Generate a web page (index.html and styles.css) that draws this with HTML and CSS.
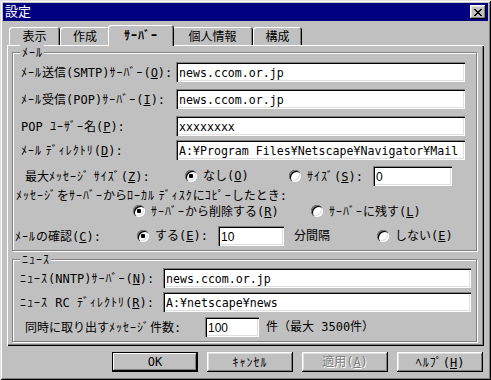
FILE: index.html
```html
<!DOCTYPE HTML>
<html lang="ja">
<head>
    <title>設定</title>
    <meta charset="UTF-8">
    <link rel="stylesheet" href="styles.css">
</head>
<body>
<div class="window">
    <div class="title-bar">
        <span class="title-text">設定</span>
        <div class="close-btn">
            <svg width="8" height="7" viewBox="0 0 8 7">
                <path d="M0 0h2v1H0zM6 0h2v1H6zM1 1h2v1H1zM5 1h2v1H5zM2 2h4v1H2zM3 3h2v1H3zM2 4h4v1H2zM1 5h2v1H1zM5 5h2v1H5zM0 6h2v1H0zM6 6h2v1H6z" fill="#000"/>
            </svg>
        </div>
    </div>

    <div class="tabs">
        <div class="tab tab-1">表示</div>
        <div class="tab tab-2">作成</div>
        <div class="tab tab-active"><span class="hw">ｻｰﾊﾞｰ</span></div>
        <div class="tab tab-4">個人情報</div>
        <div class="tab tab-5">構成</div>
    </div>

    <div class="panel">
        <div class="group group-mail">
            <span class="group-label"><span class="hw">ﾒｰﾙ</span></span>

            <div class="row r1">
                <span class="lbl lbl-mail"><span class="hw">ﾒｰﾙ</span>送信(SMTP)<span class="hw">ｻｰﾊﾞｰ</span>(<u>O</u>):</span>
                <span class="field field-mail">news.ccom.or.jp</span>
            </div>
            <div class="row r2">
                <span class="lbl lbl-mail"><span class="hw">ﾒｰﾙ</span>受信(POP)<span class="hw">ｻｰﾊﾞｰ</span>(<u>I</u>):</span>
                <span class="field field-mail">news.ccom.or.jp</span>
            </div>
            <div class="row r3">
                <span class="lbl lbl-mail">POP <span class="hw">ﾕｰｻﾞｰ</span>名(<u>P</u>):</span>
                <span class="field field-mail">xxxxxxxx</span>
            </div>
            <div class="row r4">
                <span class="lbl lbl-mail"><span class="hw">ﾒｰﾙ ﾃﾞｨﾚｸﾄﾘ</span>(<u>D</u>):</span>
                <span class="field field-mail">A:¥Program Files¥Netscape¥Navigator¥Mail</span>
            </div>

            <div class="row r5">
                <span class="lbl lbl-size">最大<span class="hw">ﾒｯｾｰｼﾞ ｻｲｽﾞ</span>(<u>Z</u>):</span>
                <span class="opt opt-none"><i class="radio checked"></i><span>なし(<u>O</u>)</span></span>
                <span class="opt opt-size"><i class="radio"></i><span><span class="hw">ｻｲｽﾞ</span>(<u>S</u>):</span></span>
                <span class="field field-num field-size">0</span>
            </div>
            <div class="row-text r6">
                <span><span class="hw">ﾒｯｾｰｼﾞ</span>を<span class="hw">ｻｰﾊﾞｰ</span>から<span class="hw">ﾛｰｶﾙ ﾃﾞｨｽｸ</span>に<span class="hw">ｺﾋﾟｰ</span>したとき:</span>
            </div>
            <div class="row-text r7">
                <span class="opt opt-delete"><i class="radio checked"></i><span><span class="hw">ｻｰﾊﾞｰ</span>から削除する(<u>R</u>)</span></span>
                <span class="opt"><i class="radio"></i><span><span class="hw">ｻｰﾊﾞｰ</span>に残す(<u>L</u>)</span></span>
            </div>
            <div class="row r8">
                <span class="lbl lbl-check"><span class="hw">ﾒｰﾙ</span>の確認(<u>C</u>):</span>
                <span class="opt opt-check"><i class="radio checked"></i><span>する(<u>E</u>):</span></span>
                <span class="field field-num field-minutes">10</span>
                <span class="unit">分間隔</span>
                <span class="opt"><i class="radio"></i><span>しない(<u>E</u>)</span></span>
            </div>
        </div>

        <div class="group group-news">
            <span class="group-label"><span class="hw">ﾆｭｰｽ</span></span>

            <div class="row n1">
                <span class="lbl lbl-news"><span class="hw">ﾆｭｰｽ</span>(NNTP)<span class="hw">ｻｰﾊﾞｰ</span>(<u>N</u>):</span>
                <span class="field field-news">news.ccom.or.jp</span>
            </div>
            <div class="row n2">
                <span class="lbl lbl-news"><span class="hw">ﾆｭｰｽ</span> RC <span class="hw">ﾃﾞｨﾚｸﾄﾘ</span>(<u>R</u>):</span>
                <span class="field field-news">A:¥netscape¥news</span>
            </div>
            <div class="row n3">
                <span class="lbl lbl-count">同時に取り出す<span class="hw">ﾒｯｾｰｼﾞ</span>件数:</span>
                <span class="field field-num field-count">100</span>
                <span class="count-note">件（最大 3500件）</span>
            </div>
        </div>
    </div>

    <div class="buttons">
        <div class="btn btn-default">OK</div>
        <div class="btn"><span class="hw">ｷｬﾝｾﾙ</span></div>
        <div class="btn btn-disabled"><span>適用(<u>A</u>)</span></div>
        <div class="btn"><span><span class="hw">ﾍﾙﾌﾟ</span>(<u>H</u>)</span></div>
    </div>
</div>
</body>
</html>
```

FILE: styles.css
```css
* {
    box-sizing: border-box;
}

body {
    margin: 0;
    background: #c0c0c0;
    font-family: "DejaVu Sans Mono", "Noto Sans CJK JP", monospace;
    font-size: 12px;
    line-height: 14px;
    color: #000;
}

u {
    text-decoration: underline;
    text-underline-offset: 1px;
}

/* half-width katakana: widen to the 7px cell of the old bitmap font */
.hw {
    font-family: "Noto Sans CJK JP", sans-serif;
    letter-spacing: 1px;
}

.window {
    width: 491px;
    height: 380px;
    padding: 3px;
    background: #c0c0c0;
    box-shadow: inset 1px 1px 0 #dfdfdf, inset -1px -1px 0 #000, inset 2px 2px 0 #fff, inset -2px -2px 0 #808080;
}

/* title bar */

.title-bar {
    display: flex;
    align-items: center;
    justify-content: space-between;
    height: 18px;
    padding: 0 2px 0 2px;
    background: #000080;
    color: #fff;
}

.title-text {
    font-size: 13px;
}

.close-btn {
    display: flex;
    align-items: center;
    justify-content: center;
    width: 16px;
    height: 14px;
    background: #c0c0c0;
    box-shadow: inset -1px -1px 0 #000, inset 1px 1px 0 #fff, inset -2px -2px 0 #808080, inset 2px 2px 0 #dfdfdf;
}

.close-btn svg {
    display: block;
}

/* tabs */

.tabs {
    display: flex;
    align-items: flex-end;
    height: 24px;
    padding-left: 6px;
}

.tab {
    display: flex;
    align-items: center;
    justify-content: center;
    height: 18px;
    padding-top: 1px;
    background: #c0c0c0;
    border-radius: 3px 3px 0 0;
    box-shadow: inset 1px 1px 0 #fff, inset -1px 0 0 #000, inset -2px 0 0 #808080;
}

.tab-1 { width: 51px; }
.tab-2 { width: 50px; }
.tab-4 { width: 81px; }
.tab-5 { width: 49px; }

.tab-active {
    position: relative;
    z-index: 1;
    width: 66px;
    height: 21px;
    margin: 0 -2px -1px;
    padding-bottom: 2px;
    font-weight: bold;
}

/* panel */

.panel {
    height: 301px;
    margin: 0 4px;
    padding: 7px 7px 0 5px;
    box-shadow: inset 1px 1px 0 #fff, inset -1px -1px 0 #000, inset -2px -2px 0 #808080;
}

.group {
    position: relative;
    border: 1px solid #808080;
    box-shadow: inset 1px 1px 0 #fff, 1px 1px 0 #fff;
}

.group-mail {
    height: 199px;
}

.group-news {
    height: 83px;
    margin-top: 8px;
}

.group-label {
    position: absolute;
    top: -8px;
    left: 7px;
    padding: 0 1px 0 2px;
    background: #c0c0c0;
}

.row {
    display: flex;
    align-items: center;
    height: 20px;
}

.row-text {
    display: flex;
    align-items: center;
    height: 14px;
}

.r1 { margin-top: 9px; }
.r2 { margin-top: 7px; }
.r3 { margin-top: 7px; }
.r4 { margin-top: 4px; }
.r5 { margin-top: 6px; }
.r6 { margin-top: 2px; padding-left: 3px; }
.r7 { margin-top: 2px; padding-left: 120px; }
.r8 { margin-top: 8px; }

.n1 { margin-top: 8px; }
.n2 { margin-top: 4px; }
.n3 { margin-top: 5px; }

.lbl {
    flex: none;
    white-space: nowrap;
}

.lbl-mail { width: 163px; padding-left: 8px; }
.lbl-size { width: 172px; padding-left: 12px; }
.lbl-check { width: 124px; padding-left: 2px; }
.lbl-news { width: 150px; padding-left: 7px; }
.lbl-count { width: 192px; padding-left: 12px; }

/* text fields */

.field {
    flex: none;
    display: flex;
    align-items: center;
    height: 20px;
    padding: 1px 0 0 3px;
    background: #fff;
    font-size: 11.6px;
    white-space: nowrap;
    overflow: hidden;
    box-shadow: inset 1px 1px 0 #808080, inset 2px 2px 0 #000, inset -1px -1px 0 #fff, inset -2px -2px 0 #dfdfdf;
}

.field-num {
    font-family: "Liberation Sans", sans-serif;
    font-size: 12px;
}

.field-mail { width: 289px; }
.field-size { width: 79px; }
.field-minutes { width: 66px; }
.field-news { width: 308px; }
.field-count { width: 54px; }

/* radio options */

.opt {
    flex: none;
    display: flex;
    align-items: center;
    white-space: nowrap;
}

.opt-none { width: 104px; }
.opt-size { width: 84px; }
.opt-delete { width: 178px; }
.opt-check { width: 81px; }

.radio {
    position: relative;
    flex: none;
    width: 12px;
    height: 12px;
    margin-right: 6px;
    border-radius: 50%;
    background: #fff;
    box-shadow: inset 1px 1px 0 #808080, inset 2px 2px 0 #000, inset -1px -1px 0 #fff, inset -2px -2px 0 #dfdfdf;
}

.radio.checked::after {
    content: "";
    position: absolute;
    left: 4px;
    top: 4px;
    width: 4px;
    height: 4px;
    border-radius: 1px;
    background: #000;
}

.unit {
    flex: none;
    width: 93px;
    padding-left: 10px;
}

.count-note {
    padding-left: 7px;
}

/* dialog buttons */

.buttons {
    display: flex;
    justify-content: flex-end;
    gap: 9px;
    margin-top: 6px;
    padding-right: 5px;
}

.btn {
    display: flex;
    align-items: center;
    justify-content: center;
    width: 86px;
    height: 20px;
    box-shadow: inset -1px -1px 0 #000, inset 1px 1px 0 #fff, inset -2px -2px 0 #808080, inset 2px 2px 0 #dfdfdf;
}

.btn-default {
    box-shadow: inset 0 0 0 1px #000, inset -2px -2px 0 #000, inset 2px 2px 0 #fff, inset -3px -3px 0 #808080;
}

.btn-disabled {
    color: #808080;
    text-shadow: 1px 1px 0 #fff;
}
```
